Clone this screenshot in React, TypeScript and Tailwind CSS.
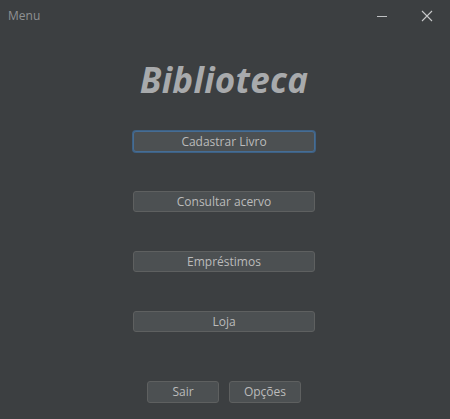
import React from 'react';

const MenuButton: React.FC<{ label: string; focused?: boolean }> = ({ label, focused }) => (
  <button
    className={
      'w-[182px] h-[21px] rounded-[3px] bg-[#4c5052] text-[12px] leading-none text-[#bbbbbb] ' +
      (focused
        ? 'border border-[#466d94] shadow-[0_0_0_1px_#3d6185]'
        : 'border border-[#5e6060]')
    }
  >
    {label}
  </button>
);

export default function App() {
  return (
    <div
      className="w-[450px] h-[419px] bg-[#3c3f41] flex flex-col"
      style={{ fontFamily: '"Open Sans", "Noto Sans", sans-serif' }}
    >
      {/* title bar */}
      <div className="h-[32px] flex items-center justify-between pl-2">
        <span className="text-[12px] text-[#8f9193]">Menu</span>
        <div className="flex items-center h-full">
          <div className="w-[44px] h-full flex items-center justify-center">
            <div className="w-[10px] h-px bg-[#bfc1c3]" />
          </div>
          <div className="w-[46px] h-full flex items-center justify-center">
            <svg width="12" height="12" viewBox="0 0 12 12">
              <path d="M1 1 L11 11 M11 1 L1 11" stroke="#c8c9ca" strokeWidth="1.1" />
            </svg>
          </div>
        </div>
      </div>

      <div className="flex flex-col items-center pr-[2px]">
        <h1 className="mt-[27px] h-[40px] flex items-center text-[35px] font-bold italic text-[#a8aaac] leading-none tracking-[0.3px]">
          Biblioteca
        </h1>
        <div className="mt-[32px] flex flex-col items-center gap-[39px]">
          <MenuButton label="Cadastrar Livro" focused />
          <MenuButton label="Consultar acervo" />
          <MenuButton label="Empréstimos" />
          <MenuButton label="Loja" />
        </div>
        <div className="mt-[49px] flex gap-[10px]">
          <button className="w-[72px] h-[22px] rounded-[3px] bg-[#4c5052] border border-[#5e6060] text-[12px] leading-none text-[#bbbbbb]">
            Sair
          </button>
          <button className="w-[72px] h-[22px] rounded-[3px] bg-[#4c5052] border border-[#5e6060] text-[12px] leading-none text-[#bbbbbb]">
            Opções
          </button>
        </div>
      </div>
    </div>
  );
}
